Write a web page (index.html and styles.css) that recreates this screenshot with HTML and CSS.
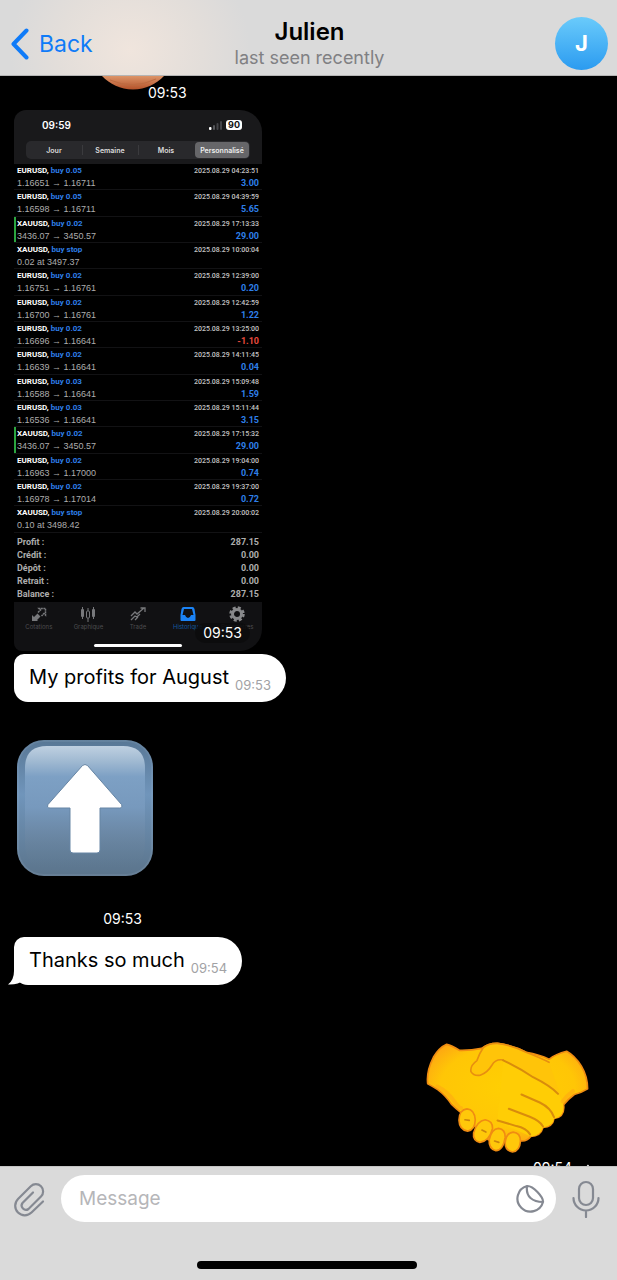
FILE: index.html
```html
<!DOCTYPE html>
<html lang="en">
<head>
    <meta charset="UTF-8">
    <meta name="viewport" content="width=device-width, initial-scale=1.0, viewport-fit=cover">
    <title>Julien</title>
    <link rel="stylesheet" href="styles.css">
</head>
<body>
    <header class="chat-header">
        <a class="back" href="#">
            <svg width="18" height="32" viewBox="0 0 18 32"><path d="M15.500 2.500 2.500 16l13 13.500" fill="none" stroke="currentColor" stroke-width="4" stroke-linecap="round" stroke-linejoin="round"/></svg>
            Back
        </a>
        <div class="peer">
            <h1>Julien</h1>
            <p>last seen recently</p>
        </div>
        <a class="avatar" href="#" aria-label="Julien profile">J</a>
    </header>

    <main class="messages">
        <div class="message sticker-tail">
            <svg width="66" height="14" viewBox="0 0 66 14">
                <defs><linearGradient id="skin" x1="0" y1="0" x2="0" y2="1"><stop offset="0" stop-color="#dc9468"/><stop offset="1" stop-color="#b4522a"/></linearGradient></defs>
                <path d="M2 0h62C56 8 46 13.500 33 13.500S10 8 2 0z" fill="url(#skin)"/>
                <path d="M10 4q23 10 46-1" fill="none" stroke="#bd6b41" stroke-width="1"/>
            </svg>
            <time class="time">09:53</time>
        </div>

        <div class="message photo">
            <div class="shot-top">
                <div class="status">
                    <span>09:59</span>
                    <span class="status-icons">
                        <svg width="14" height="9" viewBox="0 0 14 9"><rect y="6" width="2.500" height="3" rx="1" fill="#fff"/><rect x="4" y="4" width="2" height="5" rx="1" fill="#55565a"/><rect x="7.500" y="2" width="2" height="7" rx="1" fill="#444549"/><rect x="11" width="2" height="9" rx="1" fill="#444549"/></svg>
                        <span class="battery">90</span>
                    </span>
                </div>
                <div class="periods">
                    <button>Jour</button>
                    <button>Semaine</button>
                    <button>Mois</button>
                    <button class="active">Personnalisé</button>
                </div>
            </div>

            <table class="deals">
                <tr><td><b>EURUSD, <i>buy 0.05</i></b><span>1.16651 → 1.16711</span></td><td><time>2025.08.29 04:23:51</time><em>3.00</em></td></tr>
                <tr><td><b>EURUSD, <i>buy 0.05</i></b><span>1.16598 → 1.16711</span></td><td><time>2025.08.29 04:39:59</time><em>5.65</em></td></tr>
                <tr class="tp"><td><b>XAUUSD, <i>buy 0.02</i></b><span>3436.07 → 3450.57</span></td><td><time>2025.08.29 17:13:33</time><em>29.00</em></td></tr>
                <tr><td><b>XAUUSD, <i>buy stop</i></b><span>0.02 at 3497.37</span></td><td><time>2025.08.29 10:00:04</time></td></tr>
                <tr><td><b>EURUSD, <i>buy 0.02</i></b><span>1.16751 → 1.16761</span></td><td><time>2025.08.29 12:39:00</time><em>0.20</em></td></tr>
                <tr><td><b>EURUSD, <i>buy 0.02</i></b><span>1.16700 → 1.16761</span></td><td><time>2025.08.29 12:42:59</time><em>1.22</em></td></tr>
                <tr><td><b>EURUSD, <i>buy 0.02</i></b><span>1.16696 → 1.16641</span></td><td><time>2025.08.29 13:25:00</time><em class="loss">-1.10</em></td></tr>
                <tr><td><b>EURUSD, <i>buy 0.02</i></b><span>1.16639 → 1.16641</span></td><td><time>2025.08.29 14:11:45</time><em>0.04</em></td></tr>
                <tr><td><b>EURUSD, <i>buy 0.03</i></b><span>1.16588 → 1.16641</span></td><td><time>2025.08.29 15:09:48</time><em>1.59</em></td></tr>
                <tr><td><b>EURUSD, <i>buy 0.03</i></b><span>1.16536 → 1.16641</span></td><td><time>2025.08.29 15:11:44</time><em>3.15</em></td></tr>
                <tr class="tp"><td><b>XAUUSD, <i>buy 0.02</i></b><span>3436.07 → 3450.57</span></td><td><time>2025.08.29 17:15:32</time><em>29.00</em></td></tr>
                <tr><td><b>EURUSD, <i>buy 0.02</i></b><span>1.16963 → 1.17000</span></td><td><time>2025.08.29 19:04:00</time><em>0.74</em></td></tr>
                <tr><td><b>EURUSD, <i>buy 0.02</i></b><span>1.16978 → 1.17014</span></td><td><time>2025.08.29 19:37:00</time><em>0.72</em></td></tr>
                <tr><td><b>XAUUSD, <i>buy stop</i></b><span>0.10 at 3498.42</span></td><td><time>2025.08.29 20:00:02</time></td></tr>
            </table>

            <table class="totals">
                <tr><th>Profit :</th><td>287.15</td></tr>
                <tr><th>Crédit :</th><td>0.00</td></tr>
                <tr><th>Dépôt :</th><td>0.00</td></tr>
                <tr><th>Retrait :</th><td>0.00</td></tr>
                <tr><th>Balance :</th><td>287.15</td></tr>
            </table>

            <nav class="tabs">
                <a href="#">
                    <svg width="16" height="16" viewBox="0 0 16 16"><path d="M1 15V9l2 2 3.500-3.500 3 3L6 14l1 1z" fill="#77787b"/><path d="M7 6.500 9.500 4 8 2.500h6.500V9L13 7.500l-2.500 2.500" fill="none" stroke="#77787b" stroke-width="1.500" stroke-dasharray="2 .5"/></svg>
                    Cotations
                </a>
                <a href="#">
                    <svg width="16" height="16" viewBox="0 0 16 16"><path d="M2.500 1v12M8 2v14M13.500 1v12" stroke="#77787b"/><rect x="1" y="3" width="3" height="8" rx="1" fill="#77787b"/><rect x="6.500" y="5" width="3" height="7" rx="1" fill="#111113" stroke="#77787b"/><rect x="12" y="3" width="3" height="8" rx="1" fill="#77787b"/></svg>
                    Graphique
                </a>
                <a href="#">
                    <svg width="16" height="16" viewBox="0 0 16 16" fill="none" stroke="#77787b" stroke-width="1.300"><path d="M1 10l4-4 2 2 7-6M10.500 2H15v4M1 14l4-4 2 1 3-3M5 14l3-3"/></svg>
                    Trade
                </a>
                <a class="active" href="#">
                    <svg width="16" height="16" viewBox="0 0 16 16"><path fill-rule="evenodd" d="M3.500 1h9Q14 1 14.500 3l1 6v5q0 1-1 1h-13q-1 0-1-1V9l1-6Q2 1 3.500 1zm.5 2L2.500 9H5q1 3 3 3t3-3h2.500L12 3z" fill="#1b83f5"/></svg>
                    Historique
                </a>
                <a href="#">
                    <svg width="16" height="16" viewBox="0 0 16 16"><circle cx="8" cy="8" r="4.500" fill="none" stroke="#88898b" stroke-width="3"/><circle cx="8" cy="8" r="6.500" fill="none" stroke="#88898b" stroke-width="2.500" stroke-dasharray="3 2.105"/></svg>
                    Paramètres
                </a>
            </nav>
            <div class="shot-home"></div>
            <time class="photo-time">09:53</time>
        </div>

        <div class="message bubble">
            <p>My profits for August</p>
            <time class="time">09:53</time>
        </div>

        <div class="message emoji-up">
            <svg width="136" height="136" viewBox="0 0 136 136" role="img" aria-label="Up arrow">
                <defs>
                    <linearGradient id="key" x1="0" y1="0" x2="0" y2="1"><stop offset="0" stop-color="#587795"/><stop offset=".4" stop-color="#7095bb"/><stop offset="1" stop-color="#5b748b"/></linearGradient>
                    <linearGradient id="face" x1="0" y1="0" x2="0" y2="1"><stop offset="0" stop-color="#bfd0e1"/><stop offset=".12" stop-color="#a1bad2"/><stop offset=".25" stop-color="#7da0c4"/><stop offset=".5" stop-color="#7799bd"/><stop offset=".75" stop-color="#6b86a2" stop-opacity=".7"/><stop offset="1" stop-color="#61798e" stop-opacity="0"/></linearGradient>
                </defs>
                <rect width="136" height="136" rx="27" fill="url(#key)"/>
                <rect x="1" y="1" width="134" height="134" rx="26" fill="none" stroke="#a9bfd3" stroke-opacity=".15" stroke-width="2"/>
                <path d="M8 28Q8 6 30 6h76q22 0 22 22v75q0 26-24 26H32Q8 129 8 103z" fill="url(#face)"/>
                <path d="M65.500 25.500q2.500-2 5 0l34 39q1.500 3.500-2 3.500H83v42q0 3-3 3H56q-3 0-3-3V68H33q-3.500 0-2-3.500z" fill="#fff" stroke="#6685a4" stroke-width="1"/>
            </svg>
            <time class="time">09:53</time>
        </div>

        <div class="message bubble with-tail">
            <p>Thanks so much</p>
            <time class="time">09:54</time>
            <svg class="tail" width="26" height="22" viewBox="0 0 26 22"><path d="M6 0v8q0 9-6 13.500 10 .5 16-4.500l10-3V0z" fill="#fff"/></svg>
        </div>

        <div class="message emoji-shake">
            <svg width="163" height="111" viewBox="28 36 490 334" role="img" aria-label="Handshake">
                <defs>
                    <radialGradient id="hand" cx=".5" cy=".45" r=".6"><stop offset="0" stop-color="#ffcf02"/><stop offset=".7" stop-color="#ffc606"/><stop offset="1" stop-color="#fda314"/></radialGradient>
                </defs>
                <g stroke="#f08c12" stroke-width="5" stroke-linejoin="round" stroke-linecap="round">
                    <path d="M90 43Q105 46 128 61Q162 62 195 55Q217 39 243 40Q290 46 329 67Q370 74 398 88Q418 72 451 64Q475 77 495 108Q514 140 514 177Q493 190 474 194Q456 207 442 225Q446 262 413 266Q409 292 380 293Q373 320 343 320Q331 336 312 333L215 330L134 249Q116 235 104 223Q88 198 64 180Q45 168 33 162Q28 126 50 82Q67 53 90 43Z" fill="url(#hand)"/>
                    <path d="M398 97Q370 83 329 67Q290 46 243 40Q217 39 200 53Q188 70 181 92Q160 107 163 125Q171 139 191 136Q213 128 226 106Q237 86 260 90Q306 112 350 142Q402 168 425 192Q437 206 442 225" fill="#ffc409" stroke="none"/>
                    <path d="M398 97Q370 83 329 67Q290 46 243 40Q217 39 200 53Q188 70 181 92Q160 107 163 125Q171 139 191 136Q213 128 226 106Q237 86 260 90" fill="none" stroke="#e88f10"/>
                    <path d="M260 90Q307 111 350 142Q402 168 425 192Q446 218 440 244Q434 264 413 266Q411 288 380 293Q371 318 343 320L242 275" fill="#ffcd05" stroke="none"/>
                    <path d="M260 91Q307 113 350 142Q402 168 425 192M315 194L370 218Q403 234 413 262M277 237L340 261Q370 273 380 290M243 272L300 289Q329 295 341 314" fill="none" stroke="#d98c0c" stroke-width="6"/>
                    <g fill="#ffc80a">
                        <path d="M151 237Q174 239 176 270Q175 302 153 304Q128 300 127 271Q128 239 151 237Z"/>
                        <path d="M206 270Q229 274 228 296Q218 335 190 338Q168 332 171 310Q181 273 206 270Z"/>
                        <path d="M246 296Q267 299 266 323Q260 362 238 363Q216 357 218 330Q225 297 246 296Z"/>
                        <path d="M290 307Q312 309 312 334Q310 365 288 367Q265 362 266 339Q269 309 290 307Z"/>
                    </g>
                    <path d="M145 270l13 2M196 301l12 6M234 334l13 4" fill="none" stroke="#cb860c" stroke-width="5"/>
                    <path d="M62 170Q91 185 110 211T133 235M470 184Q451 198 439 215" fill="none" stroke="#ff9b19" stroke-opacity=".4" stroke-width="12"/>
                </g>
            </svg>
            <span class="sent"><time class="time">09:54</time>
                <svg width="9" height="8" viewBox="0 0 9 8"><path d="M1 4.500 3.500 7 8.500 1" fill="none" stroke="#fff" stroke-width="1.500"/></svg>
            </span>
        </div>
    </main>

    <footer class="composer">
        <div class="composer-row">
            <button aria-label="Attach file">
                <svg width="32" height="36" viewBox="0 0 32 36" fill="none" stroke="currentColor" stroke-width="2.200" stroke-linecap="round"><path d="M20 11.500 9.500 22a4.300 4.300 0 0 0 6 6L28 15.500a7.200 7.200 0 0 0-10.200-10.200L5 18a9.500 9.500 0 0 0 13.500 13.500L30 20.500"/></svg>
            </button>
            <div class="field">
                <input type="text" placeholder="Message" aria-label="Message">
                <button aria-label="Stickers">
                    <svg width="30" height="30" viewBox="0 0 30 30" fill="none" stroke="currentColor" stroke-width="2.200" stroke-linejoin="round"><path d="M12 2A13 13 0 1 0 28 18C28.500 13 18 1.500 12 2zM12 2q-1 8 3.500 12T28 18"/></svg>
                </button>
            </div>
            <button aria-label="Record voice message">
                <svg width="28" height="38" viewBox="0 0 28 38" fill="none" stroke="currentColor" stroke-width="2.200" stroke-linecap="round"><rect x="7" y="2" width="14" height="23" rx="7"/><path d="M1.500 18a12.500 12.500 0 0 0 25 0M14 30.500V37"/></svg>
            </button>
        </div>
        <div class="home-bar"></div>
    </footer>
</body>
</html>
```

FILE: styles.css
```css
* {
    box-sizing: border-box;
}
body {
    margin: 0;
    height: 100vh;
    display: flex;
    flex-direction: column;
    overflow: hidden;
    background-color: #000;
    font-family: Inter, "Noto Sans", sans-serif;
    color: #000;
}
h1, p {
    margin: 0;
}
a {
    color: inherit;
    text-decoration: none;
}
button {
    padding: 0;
    border: none;
    background: none;
    color: inherit;
    font: inherit;
    cursor: pointer;
}
svg {
    display: block;
    flex-shrink: 0;
}

/* Header */
.chat-header {
    flex-shrink: 0;
    display: grid;
    grid-template-columns: 1fr auto 1fr;
    align-items: center;
    height: 76px;
    padding: 12px 9px 0 11px;
    background: radial-gradient(ellipse 120px 110px at 130px 50px, #f0e5dd, #e3deda 60%, #dadada);
    border-bottom: 1px solid #b5b5b5;
}
.back {
    display: flex;
    align-items: center;
    gap: 10px;
    font-size: 23px;
    color: #0f7bf8;
}
.peer {
    text-align: center;
}
.peer h1 {
    font-size: 24px;
    line-height: 28px;
    font-weight: 600;
}
.peer p {
    font-size: 18px;
    line-height: 24px;
    color: #808083;
}
.avatar {
    justify-self: end;
    width: 53px;
    height: 53px;
    border-radius: 50%;
    background: linear-gradient(#6acbfb, #2b9bf0);
    color: #fff;
    font-size: 22px;
    line-height: 53px;
    font-weight: 700;
    text-align: center;
}

/* Messages */
.messages {
    flex: 1;
    min-height: 0;
    display: flex;
    flex-direction: column;
    align-items: flex-start;
    padding: 0 28px 0 14px;
    overflow: hidden;
}
.message {
    flex-shrink: 0;
}
.time {
    font-size: 14px;
    line-height: 18px;
    color: #fff;
}
.sticker-tail {
    display: flex;
    height: 34px;
    padding-left: 86px;
}
.sticker-tail .time {
    margin: 8px 0 0 -18px;
}
.bubble {
    position: relative;
    display: flex;
    align-items: flex-end;
    gap: 6px;
    padding: 7px 15px 9px;
    background-color: #fff;
    border-radius: 10px 24px 24px 14px;
}
.bubble p {
    font-size: 20px;
    line-height: 32px;
}
.bubble .time {
    font-size: 13px;
    line-height: 16px;
    color: #a2a2a5;
}
.tail {
    position: absolute;
    left: -6px;
    bottom: 0;
}
.emoji-up {
    display: flex;
    flex-direction: column;
    align-items: flex-end;
    gap: 34px;
    padding: 38px 0 9px 3px;
}
.emoji-up .time {
    padding-right: 11px;
}
.emoji-shake {
    align-self: flex-end;
    display: flex;
    flex-direction: column;
    align-items: flex-end;
    gap: 6px;
    padding-top: 57px;
}
.sent {
    display: flex;
    align-items: center;
    gap: 8px;
}

/* Trading history photo */
.photo {
    position: relative;
    width: 248px;
    margin-bottom: 3px;
    overflow: hidden;
    border-radius: 12px 22px 22px 8px;
    background-color: #000;
    font-size: 9px;
    color: #adadad;
}
.shot-top {
    padding: 8px 12px 5px;
    background-color: #19191b;
}
.status {
    display: flex;
    justify-content: space-between;
    align-items: center;
    padding: 0 8px 0 16px;
    font-size: 10px;
    line-height: 14px;
    font-weight: 600;
    color: #fff;
}
.status-icons {
    display: flex;
    align-items: center;
    gap: 3px;
}
.battery {
    padding: 0 2px;
    border-radius: 3px;
    background-color: #fff;
    color: #111;
    font-size: 9px;
    line-height: 10px;
    font-weight: 700;
}
.periods {
    display: grid;
    grid-template-columns: repeat(4, 1fr);
    margin-top: 9px;
    border-radius: 5px;
    background-color: #29292c;
}
.periods button {
    height: 18px;
    font-size: 7px;
    font-weight: 600;
    color: #ddd;
}
.periods .active {
    height: 16px;
    margin: 1px;
    border-radius: 4px;
    background-color: #666669;
    color: #eee;
}
.periods button + button:not(.active) {
    background: linear-gradient(#3b3b3e, #3b3b3e) left / 1px 10px no-repeat;
}
.deals, .totals {
    width: 100%;
    border-collapse: collapse;
}
.deals {
    height: 369px;
}
.deals td {
    padding: 1px 3px 0;
    border-bottom: 1px solid #121214;
    line-height: 12px;
    vertical-align: top;
}
.deals td + td, .totals td {
    text-align: right;
}
.deals b, .deals em, .deals time, .totals {
    font-family: Roboto, "Liberation Sans", sans-serif;
    font-weight: 700;
}
.deals b, .deals span, .deals em, .deals time {
    display: block;
}
.deals b {
    font-size: 8px;
    color: #fff;
}
.deals i, .deals em {
    font-style: normal;
    color: #2e7fe8;
}
.deals em {
    font-size: 9px;
}
.deals .loss {
    color: #e84a3c;
}
.deals span {
    font-family: "Liberation Sans", sans-serif;
    font-size: 9px;
}
.deals time {
    font-size: 7px;
    font-weight: 500;
    color: #c4c4c4;
}
.deals .tp td:first-child {
    box-shadow: inset 2px 0 #2ba640;
}
.totals {
    margin: 3px 0 1px;
    font-size: 9px;
}
.totals th, .totals td {
    padding: 0 3px;
    line-height: 13px;
}
.totals th {
    text-align: left;
}
.tabs {
    display: grid;
    grid-template-columns: repeat(5, 1fr);
    padding-top: 4px;
    background-color: #111113;
    font-size: 6px;
    line-height: 10px;
    color: #4d4d50;
}
.tabs a {
    display: flex;
    flex-direction: column;
    align-items: center;
}
.tabs .active {
    color: #13599f;
}
.shot-home {
    height: 19px;
    padding-top: 12px;
    background-color: #111113;
}
.shot-home::before {
    content: "";
    display: block;
    width: 88px;
    height: 3px;
    margin: 0 auto;
    border-radius: 2px;
    background-color: #fff;
}
.photo-time {
    position: absolute;
    right: 12px;
    bottom: 8px;
    padding: 0 8px;
    border-radius: 10px;
    background-color: rgba(12, 12, 13, 0.85);
    font-size: 14px;
    line-height: 20px;
    color: #fff;
}

/* Composer */
.composer {
    flex-shrink: 0;
    padding: 8px 17px 11px 13px;
    background-color: #dadada;
    border-top: 1px solid #c4c4c4;
    color: #858992;
}
.composer-row {
    display: flex;
    align-items: center;
    gap: 16px;
}
.field {
    flex: 1;
    min-width: 0;
    display: flex;
    align-items: center;
    height: 47px;
    padding: 0 11px 0 18px;
    border-radius: 24px;
    background-color: #fff;
}
.field input {
    flex: 1;
    min-width: 0;
    padding: 0;
    border: none;
    outline: none;
    background: none;
    font: 19px Inter, "Noto Sans", sans-serif;
    color: #000;
}
.field input::placeholder {
    color: #b6b6b9;
}
.home-bar {
    width: 220px;
    height: 8px;
    margin: 39px auto 0;
    border-radius: 4px;
    background-color: #000;
}
```
